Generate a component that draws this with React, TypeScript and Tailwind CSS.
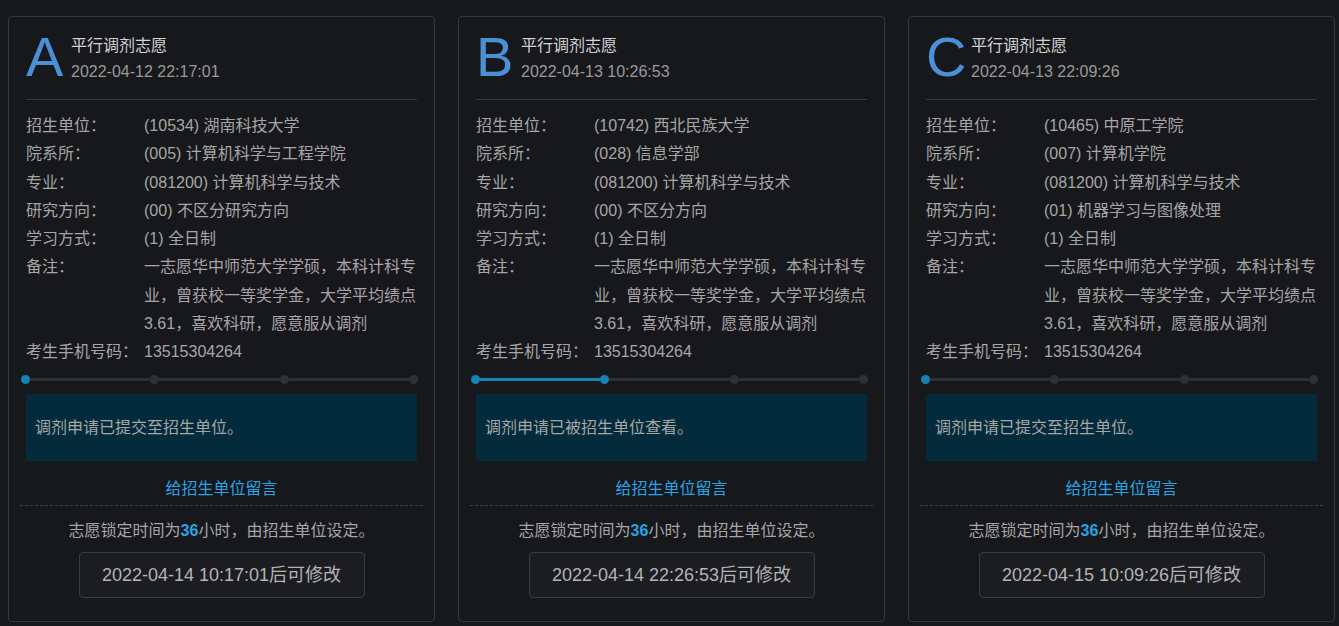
import React from "react";

type Choice = {
    letter: string;
    time: string;
    unit: string;
    dept: string;
    major: string;
    direction: string;
    mode: string;
    step: number;
    status: string;
    unlock: string;
};

const remark = "一志愿华中师范大学学硕，本科计科专业，曾获校一等奖学金，大学平均绩点3.61，喜欢科研，愿意服从调剂";
const phone = "13515304264";

const choices: Choice[] = [
    {
        letter: "A",
        time: "2022-04-12 22:17:01",
        unit: "(10534) 湖南科技大学",
        dept: "(005) 计算机科学与工程学院",
        major: "(081200) 计算机科学与技术",
        direction: "(00) 不区分研究方向",
        mode: "(1) 全日制",
        step: 1,
        status: "调剂申请已提交至招生单位。",
        unlock: "2022-04-14 10:17:01后可修改",
    },
    {
        letter: "B",
        time: "2022-04-13 10:26:53",
        unit: "(10742) 西北民族大学",
        dept: "(028) 信息学部",
        major: "(081200) 计算机科学与技术",
        direction: "(00) 不区分方向",
        mode: "(1) 全日制",
        step: 2,
        status: "调剂申请已被招生单位查看。",
        unlock: "2022-04-14 22:26:53后可修改",
    },
    {
        letter: "C",
        time: "2022-04-13 22:09:26",
        unit: "(10465) 中原工学院",
        dept: "(007) 计算机学院",
        major: "(081200) 计算机科学与技术",
        direction: "(01) 机器学习与图像处理",
        mode: "(1) 全日制",
        step: 1,
        status: "调剂申请已提交至招生单位。",
        unlock: "2022-04-15 10:09:26后可修改",
    },
];

function Steps({ step }: { step: number }) {
    const dot = (i: number) => (
        <span className={"w-[9px] h-[9px] rounded-full shrink-0 " + (i < step ? "bg-[#1682b5]" : "bg-[#2e3034]")} />
    );
    const line = (i: number) => (
        <span className={"flex-1 h-[3px] " + (i < step - 1 ? "bg-[#1682b5]" : "bg-[#2e3034]")} />
    );
    return (
        <div className="flex items-center -ml-[5px] -mr-[1px] mt-[9px] mb-[10px] h-[9px]">
            {dot(0)}
            {line(0)}
            {dot(1)}
            {line(1)}
            {dot(2)}
            {line(2)}
            {dot(3)}
        </div>
    );
}

function Card({ c }: { c: Choice }) {
    const rows: [string, string][] = [
        ["招生单位：", c.unit],
        ["院系所：", c.dept],
        ["专业：", c.major],
        ["研究方向：", c.direction],
        ["学习方式：", c.mode],
        ["备注：", remark],
        ["考生手机号码：", phone],
    ];
    return (
        <div className="w-[427px] border border-[#36383c] rounded-[4px] bg-[#17181b] px-[17px] pt-[12px] pb-[23px]">
            <div className="flex items-start">
                <div className="text-[56px] leading-[56px] text-[#4b8fd6] w-[45px]">{c.letter}</div>
                <div className="pt-[4px]">
                    <div className="text-[16px] leading-[26px] text-[#d2d2d2]">平行调剂志愿</div>
                    <div className="text-[16px] leading-[26px] text-[#9a9a9a]">{c.time}</div>
                </div>
            </div>
            <div className="mt-[14px] h-px bg-[#37393c]" />
            <div className="mt-[12px] grid grid-cols-[118px_1fr] text-[16px] leading-[28.25px] text-[#a6a6a6]">
                {rows.map(([k, v]) => (
                    <React.Fragment key={k}>
                        <div>{k}</div>
                        <div>{v}</div>
                    </React.Fragment>
                ))}
            </div>
            <Steps step={c.step} />
            <div className="h-[67px] bg-[#032b3b] flex items-center pl-[9px] text-[16px] text-[#a6a6a6]">
                {c.status}
            </div>
            <div className="mt-[16px] text-center text-[16px] leading-[24px] text-[#2aa3e6]">给招生单位留言</div>
            <div className="mt-[4px] -mx-[6px] border-t border-dashed border-[#3e4043]" />
            <div className="mt-[13px] text-center text-[16px] leading-[24px] text-[#a6a6a6]">
                志愿锁定时间为<span className="font-bold text-[#2aa3e6]">36</span>小时，由招生单位设定。
            </div>
            <div className="mt-[9px] flex justify-center">
                <div className="h-[46px] w-[286px] flex items-center justify-center border border-[#3a3c40] rounded-[4px] bg-[#1c1d20] text-[18px] text-[#b4b4b4]">
                    {c.unlock}
                </div>
            </div>
        </div>
    );
}

export default function App() {
    return (
        <div
            className="min-h-[626px] bg-[#17181b] pl-[8px] pt-[16px] flex gap-[23px] items-start"
            style={{ fontFamily: '"Liberation Sans", "Noto Sans CJK SC", sans-serif' }}
        >
            {choices.map((c) => (
                <Card key={c.letter} c={c} />
            ))}
        </div>
    );
}
